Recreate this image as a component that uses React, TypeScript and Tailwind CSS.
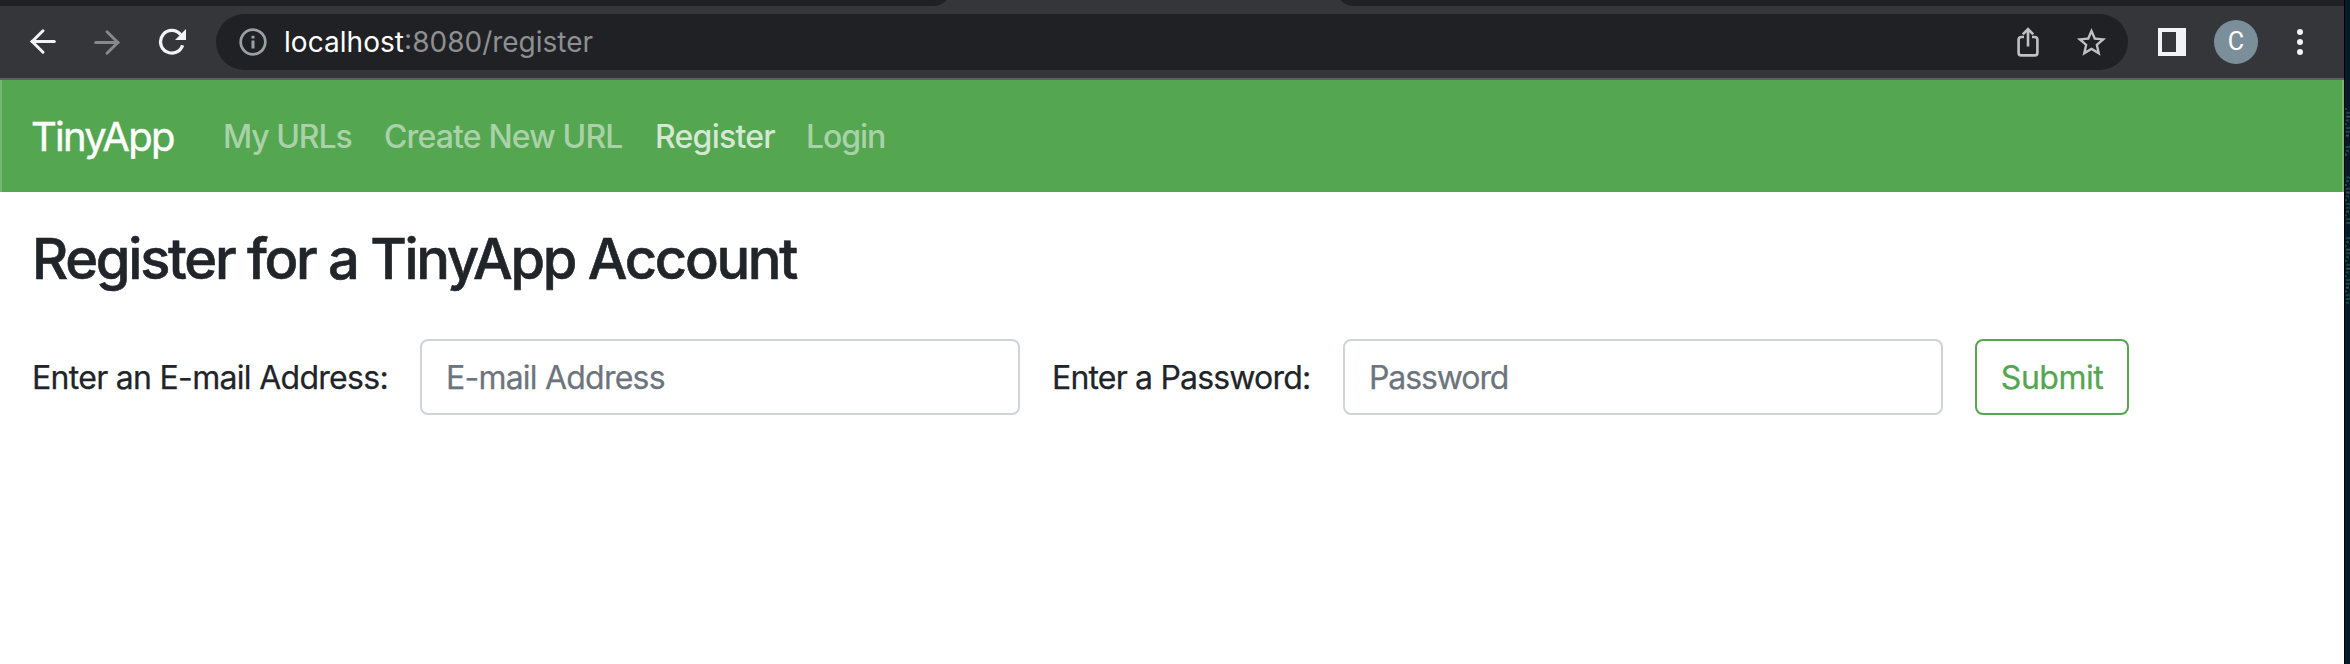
function BackIcon({ className }: { className: string }) {
  return (
    <svg viewBox="0 0 28 28" className={className} fill="none" stroke="currentColor" strokeWidth="3" strokeLinecap="round">
      <path d="M3 13.5h22.3" />
      <path d="M14 2.8 3.2 13.5 14 24.2" strokeLinejoin="miter" />
    </svg>
  );
}

function ReloadIcon() {
  return (
    <svg viewBox="0 0 28 28" className="h-7 w-7" fill="none">
      <path d="M22.6 6.6A11.3 11.3 0 1 0 24.6 17.2" stroke="#f1f3f4" strokeWidth="3.3" strokeLinecap="butt" />
      <path d="M28 1v11H17z" fill="#f1f3f4" />
    </svg>
  );
}

function InfoIcon() {
  return (
    <svg viewBox="0 0 28 28" className="h-7 w-7" fill="none">
      <circle cx="14" cy="14" r="12.3" stroke="#9aa0a6" strokeWidth="2.7" />
      <path d="M12.5 7.7h3v2.9h-3zM12.5 12.6h3v7.9h-3z" fill="#9aa0a6" />
    </svg>
  );
}

function ShareIcon() {
  return (
    <svg viewBox="0 0 24 32" className="h-8 w-6" fill="none" stroke="#c0c1c2" strokeWidth="2.6">
      <path d="M8 11H5.2A2.6 2.6 0 0 0 2.6 13.6v13.2a2.6 2.6 0 0 0 2.6 2.6h13.6a2.6 2.6 0 0 0 2.6-2.6V13.6a2.6 2.6 0 0 0-2.6-2.6H16" />
      <path d="M12 20.5V4M6.8 8.4 12 3.2l5.2 5.2" />
    </svg>
  );
}

function StarIcon() {
  return (
    <svg viewBox="0 0 24 24" className="mt-px h-[35px] w-[35px]" fill="#c0c1c2">
      <path d="M22 9.24l-7.19-.62L12 2 9.19 8.63 2 9.24l5.46 4.73L5.82 21 12 17.27 18.18 21l-1.63-7.03L22 9.24zM12 15.4l-3.76 2.27 1-4.28-3.32-2.88 4.38-.38L12 6.1l1.71 4.04 4.38.38-3.32 2.88 1 4.28L12 15.4z" />
    </svg>
  );
}

function BrowserBar() {
  return (
    <header className="shrink-0 border-b-2 border-[#5f6063] bg-[#35363a]">
      <div className="flex h-1.5 items-end justify-between overflow-hidden">
        <div className="h-8 w-[950px] shrink-0 rounded-br-2xl bg-[#202124]" />
        <div className="h-8 w-[1007px] shrink-0 rounded-bl-2xl bg-[#202124]" />
      </div>
      <div className="flex h-[72px] items-center">
        <div className="ml-[29px] flex w-[187px] items-center">
          <BackIcon className="h-7 w-7 text-[#f1f3f4]" />
          <BackIcon className="ml-9 h-7 w-7 rotate-180 text-[#87888a]" />
          <div className="ml-[37px]"><ReloadIcon /></div>
        </div>
        <div className="flex h-14 w-[1912px] items-center rounded-full bg-[#202124] pr-[19px] pl-[23px]">
          <InfoIcon />
          <div className="ml-[17px] flex-1 text-[28px]">
            <span className="tracking-[0.05px] text-white">localhost</span>
            <span className="text-[#8e8f91]">:8080/register</span>
          </div>
          <ShareIcon />
          <div className="ml-[34px]"><StarIcon /></div>
        </div>
        <div className="ml-[30px] h-7 w-7 border-4 border-r-[10px] border-[#f1f3f4]" />
        <div className="ml-7 flex h-11 w-11 items-center justify-center rounded-full bg-[#7b8f9b] font-['Roboto',sans-serif] text-[25px] text-white">C</div>
        <div className="ml-[39px] flex flex-col gap-1">
          <span className="h-1.5 w-1.5 rounded-full bg-[#f1f3f4]" />
          <span className="h-1.5 w-1.5 rounded-full bg-[#f1f3f4]" />
          <span className="h-1.5 w-1.5 rounded-full bg-[#f1f3f4]" />
        </div>
      </div>
    </header>
  );
}

function Navbar() {
  return (
    <nav className="flex h-28 shrink-0 items-center border-x-2 border-[#77b675] bg-[#54a651] pt-0.5 pl-[29px] text-[32px] font-medium text-white/50">
      <a className="w-[192px] text-[40px] font-normal tracking-[-1.75px] text-white [-webkit-text-stroke:0.4px]">TinyApp</a>
      <a className="w-[161px] tracking-[-1.05px]">My URLs</a>
      <a className="w-[271px] tracking-[-0.85px]">Create New URL</a>
      <a className="w-[151px] tracking-[-0.75px] text-white/75">Register</a>
      <a className="tracking-[-1.1px]">Login</a>
    </nav>
  );
}

const inputClass =
  "h-[76px] w-[600px] rounded-lg border-2 border-[#ced4da] bg-white px-[24px] text-[32px] outline-none placeholder:text-[#6c757d] placeholder:opacity-100";

function DesktopEdge() {
  const rows = Array.from({ length: 52 }, (_, i) => i).filter((i) => i < 8 || (i > 9 && i < 13) || (i > 17 && i < 31) || i > 33);
  return (
    <aside className="w-1.5 shrink-0 border-l border-black bg-[#031b26]">
      <svg viewBox="0 0 5 664" className="h-[664px] w-[5px]">
        {rows.map((i) => (
          <rect key={i} x={(i * 3) % 4 === 0 ? 0 : 1} y={108 + i * 3.8} width={2 + ((i * 7) % 4)} height="2" fill={i % 5 === 2 ? "#3c4a50" : "#1c4449"} />
        ))}
      </svg>
    </aside>
  );
}

export default function App() {
  return (
    <div className="flex h-[664px] w-[2350px] overflow-hidden bg-white font-['Inter',sans-serif] whitespace-nowrap">
      <div className="flex w-[2344px] shrink-0 flex-col">
        <BrowserBar />
        <Navbar />
        <main className="text-[#212529]">
          <h1 className="mt-[33px] pl-[32px] text-[56px] leading-[68px] font-medium tracking-[-2.27px] [-webkit-text-stroke:0.6px]">Register for a TinyApp Account</h1>
          <form className="mt-[46px] flex items-center pl-[32px] text-[32px] [-webkit-text-stroke:0.25px]">
            <label className="w-[388px] pt-0.5 tracking-[-0.7px]">Enter an E-mail Address:</label>
            <input className={`${inputClass} tracking-[-0.78px]`} placeholder="E-mail Address" />
            <label className="ml-8 w-[291px] pt-0.5 tracking-[-0.82px]">Enter a Password:</label>
            <input className={`${inputClass} tracking-[-1.1px]`} placeholder="Password" type="text" />
            <button type="button" className="ml-8 h-[76px] w-[154px] rounded-lg border-2 border-[#54a651] pt-0.5 tracking-[-0.5px] text-[#54a651]">Submit</button>
          </form>
        </main>
      </div>
      <DesktopEdge />
    </div>
  );
}
